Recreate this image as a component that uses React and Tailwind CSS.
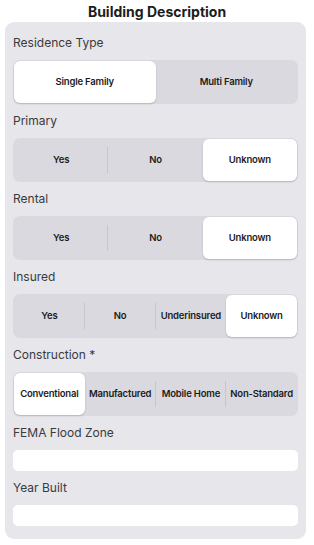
const font = { fontFamily: 'Inter, "Noto Sans", sans-serif' };

function Segmented({ options, selected }) {
  return (
    <div className="flex h-[44px] rounded-[7px] bg-[#d9d9df] p-[1px]">
      {options.map((opt, i) => {
        const active = opt === selected;
        const nextActive = options[i + 1] === selected;
        const showSep = i < options.length - 1 && !active && !nextActive;
        return (
          <div key={opt} className="relative flex min-w-0 flex-1 items-center justify-center">
            <div
              className={`flex h-full w-full items-center justify-center whitespace-nowrap rounded-[6px] text-[9.5px] font-semibold tracking-[-0.02em] text-[#1c1c1e] ${
                active ? 'bg-white shadow-[0_1px_2px_rgba(0,0,0,0.18)]' : ''
              }`}
            >
              {opt}
            </div>
            {showSep && <span className="absolute right-0 top-[8px] h-[26px] w-px bg-[#c6c6cc]" />}
          </div>
        );
      })}
    </div>
  );
}

function Label({ children }) {
  return (
    <div className="flex h-[34px] items-center text-[12px] text-[#3a3a3c]">{children}</div>
  );
}

export default function App() {
  return (
    <div className="min-h-[545px] w-[314px] bg-white" style={font}>
      <div className="flex h-[22px] items-center justify-center text-[14px] font-bold text-[#1c1c1e]">
        Building Description
      </div>
      <div className="ml-[5px] w-[301px] rounded-[9px] bg-[#e6e6eb] px-[8px] pb-[13px] pt-[4px]">
        <Label>Residence Type</Label>
        <Segmented options={['Single Family', 'Multi Family']} selected="Single Family" />
        <Label>Primary</Label>
        <Segmented options={['Yes', 'No', 'Unknown']} selected="Unknown" />
        <Label>Rental</Label>
        <Segmented options={['Yes', 'No', 'Unknown']} selected="Unknown" />
        <Label>Insured</Label>
        <Segmented options={['Yes', 'No', 'Underinsured', 'Unknown']} selected="Unknown" />
        <Label>Construction *</Label>
        <Segmented
          options={['Conventional', 'Manufactured', 'Mobile Home', 'Non-Standard']}
          selected="Conventional"
        />
        <Label>FEMA Flood Zone</Label>
        <div className="h-[21px] rounded-[5px] bg-white" />
        <Label>Year Built</Label>
        <div className="h-[21px] rounded-[5px] bg-white" />
      </div>
    </div>
  );
}
